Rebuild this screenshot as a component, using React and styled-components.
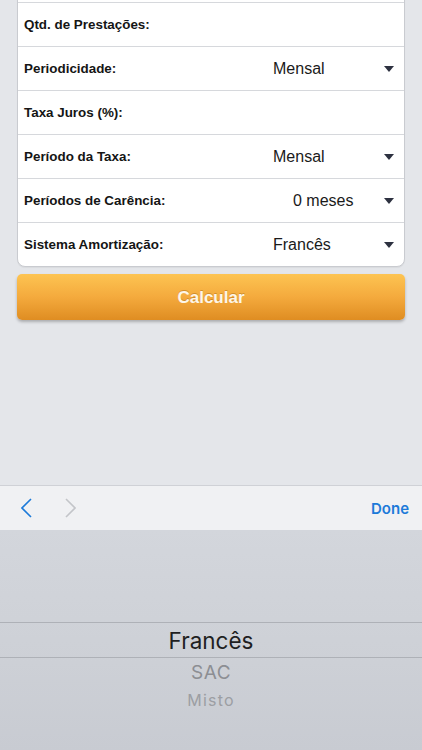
import React from 'react';
import styled, { createGlobalStyle } from 'styled-components';

const GlobalStyle = createGlobalStyle`
  html, body {
    margin: 0;
    padding: 0;
    background: #e4e6ea;
  }
  * {
    box-sizing: border-box;
  }
`;

const Screen = styled.div`
  display: flex;
  flex-direction: column;
  width: 422px;
  height: 750px;
  overflow: hidden;
  font-family: 'Liberation Sans', Arial, sans-serif;
`;

const Content = styled.main`
  flex: 1;
  display: flex;
  flex-direction: column;
  padding: 0 17px;
  background: #e4e6ea;
  overflow: hidden;
`;

const Card = styled.div`
  margin-top: -42px;
  background: #ffffff;
  border: 1px solid #c9cbd0;
  border-radius: 8px;
  box-shadow: 0 1px 1px rgba(0, 0, 0, 0.05);
`;

const Row = styled.div`
  display: flex;
  align-items: center;
  height: 44px;
  padding: 0 10px 0 6px;
  border-bottom: 1px solid #d6d8dc;
  &:last-child {
    border-bottom: none;
    height: 43px;
  }
`;

const Label = styled.span`
  flex: 1;
  font-size: 13.4px;
  font-weight: 700;
  color: #151515;
`;

const Value = styled.span`
  width: 100px;
  padding-left: ${p => p.$indent || 0}px;
  font-size: 16px;
  color: #1a1a1a;
`;

const Caret = styled.span`
  width: 0;
  height: 0;
  margin-left: 11px;
  border-left: 5px solid transparent;
  border-right: 5px solid transparent;
  border-top: 6px solid #2d3140;
`;

const CalcButton = styled.button`
  margin-top: 7px;
  height: 46px;
  padding-top: 2px;
  border: none;
  border-radius: 5px;
  background: linear-gradient(to bottom, #fdc452 0%, #f4aa3d 50%, #df8d22 100%);
  box-shadow: 0 2px 3px rgba(0, 0, 0, 0.25);
  color: #fdf6e8;
  font-family: 'Liberation Sans', Arial, sans-serif;
  font-size: 17px;
  font-weight: 700;
  text-shadow: 0 -1px 0 rgba(150, 90, 10, 0.4);
`;

const Toolbar = styled.div`
  display: flex;
  align-items: center;
  height: 45px;
  padding: 0 13px 0 21px;
  background: #f0f1f3;
  border-top: 1px solid #cfd1d6;
`;

const NavButton = styled.span`
  display: flex;
  margin-right: ${p => p.$gap || 0}px;
  svg {
    display: block;
  }
`;

const Done = styled.span`
  margin-left: auto;
  font-family: 'Inter', 'Liberation Sans', sans-serif;
  font-size: 15px;
  font-weight: 600;
  color: #1c7ad9;
`;

const Picker = styled.div`
  height: 220px;
  display: flex;
  flex-direction: column;
  padding-top: 92px;
  background: linear-gradient(to bottom, #d3d6dc 0%, #cdd0d6 60%, #c8cbd2 100%);
  font-family: 'Inter', 'Liberation Sans', sans-serif;
`;

const Selected = styled.div`
  height: 36px;
  display: flex;
  align-items: center;
  justify-content: center;
  border-top: 1px solid #aeb1b7;
  border-bottom: 1px solid #aeb1b7;
  font-size: 22.5px;
  color: #1f1f22;
`;

const Option = styled.div`
  height: 28px;
  display: flex;
  align-items: center;
  justify-content: center;
  font-size: ${p => p.$size}px;
  color: ${p => p.$color};
  letter-spacing: ${p => p.$spacing || 0.5}px;
`;

const Chevron = ({ dir, color }) => (
  <svg width="12" height="20" viewBox="0 0 12 20">
    <polyline
      points={dir === 'left' ? '10,1 1,10 10,19' : '2,1 11,10 2,19'}
      fill="none"
      stroke={color}
      strokeWidth="1.6"
    />
  </svg>
);

const fields = [
  { label: '' },
  { label: 'Qtd. de Prestações:' },
  { label: 'Periodicidade:', value: 'Mensal' },
  { label: 'Taxa Juros (%):' },
  { label: 'Período da Taxa:', value: 'Mensal' },
  { label: 'Períodos de Carência:', value: '0 meses', indent: 20 },
  { label: 'Sistema Amortização:', value: 'Francês' },
];

const App = () => (
  <Screen>
    <GlobalStyle />
    <Content>
      <Card>
        {fields.map((f, i) => (
          <Row key={i}>
            <Label>{f.label}</Label>
            {f.value && (
              <>
                <Value $indent={f.indent}>{f.value}</Value>
                <Caret />
              </>
            )}
          </Row>
        ))}
      </Card>
      <CalcButton>Calcular</CalcButton>
    </Content>
    <Toolbar>
      <NavButton $gap={31}>
        <Chevron dir="left" color="#1c7ad9" />
      </NavButton>
      <NavButton>
        <Chevron dir="right" color="#c3c5c9" />
      </NavButton>
      <Done>Done</Done>
    </Toolbar>
    <Picker>
      <Selected>Francês</Selected>
      <Option $size={19} $color="#8c8e93">SAC</Option>
      <Option $size={16} $spacing={1.2} $color="#9c9ea3">Misto</Option>
    </Picker>
  </Screen>
);

export default App;
